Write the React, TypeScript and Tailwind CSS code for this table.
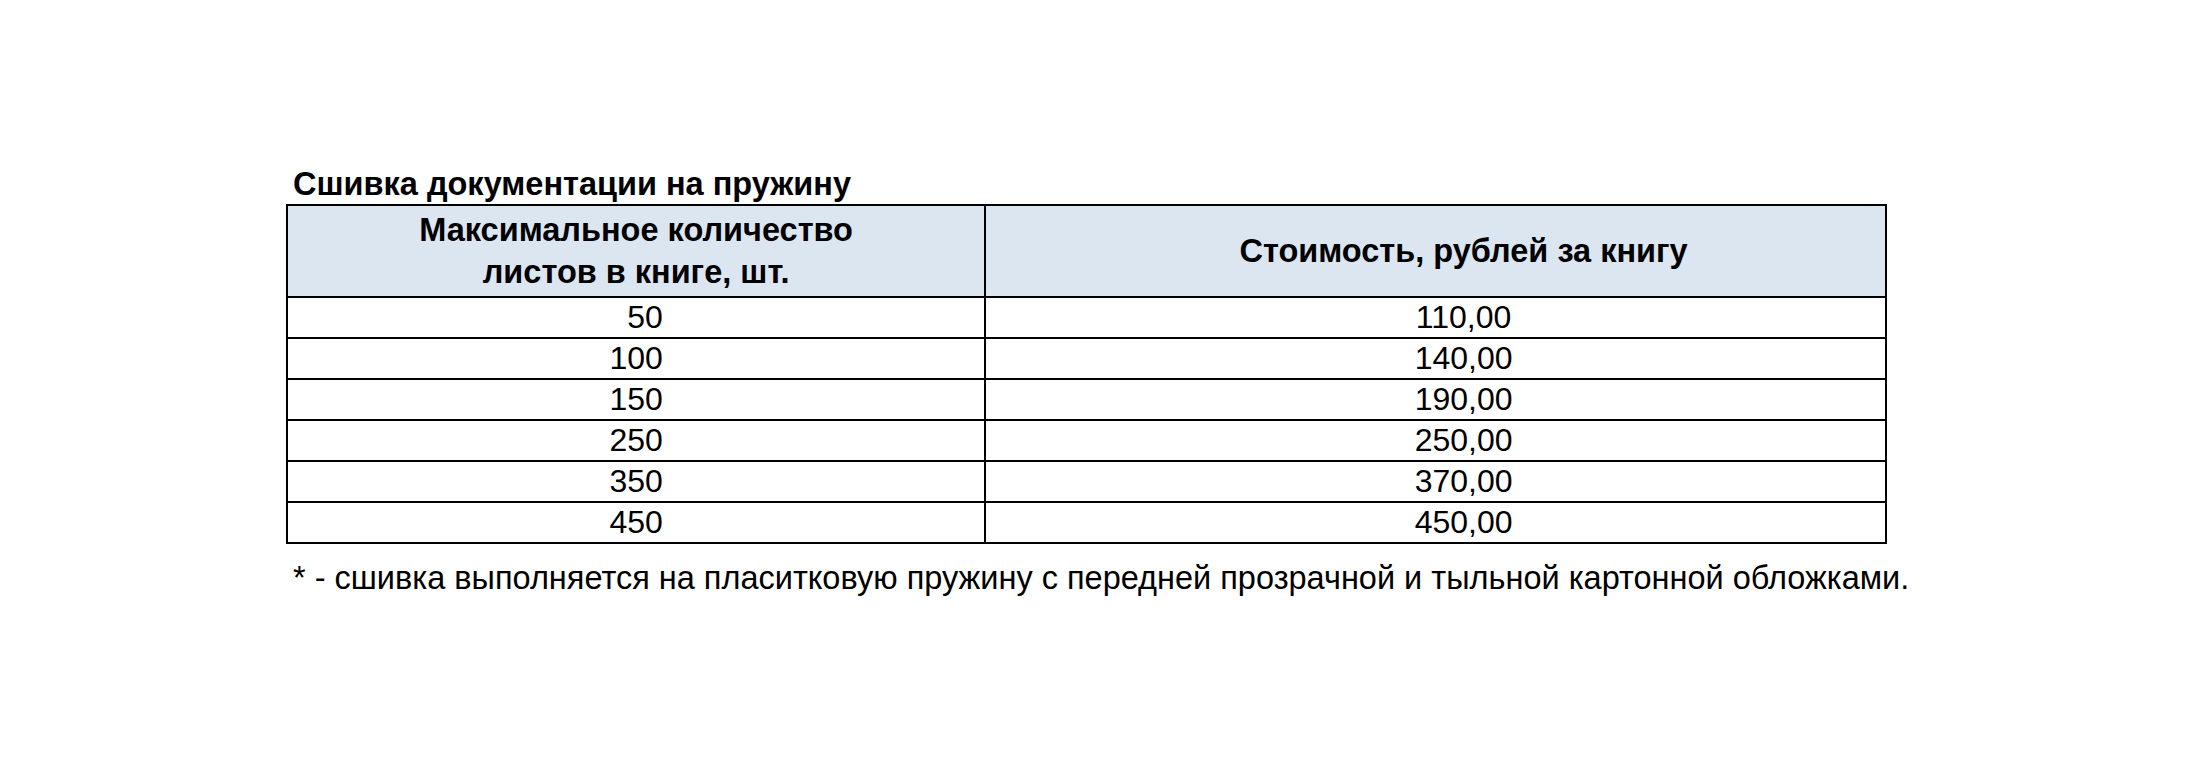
const rows = [
  ["\u00a0\u00a050", "110,00"],
  ["100", "140,00"],
  ["150", "190,00"],
  ["250", "250,00"],
  ["350", "370,00"],
  ["450", "450,00"],
];

export default function App() {
  return (
    <div
      className="min-h-[768px] w-full bg-white pt-[166px] pl-[286px] text-black"
      style={{ fontFamily: '"Liberation Sans", Arial, sans-serif' }}
    >
      <div className="pl-[7px] text-[32.5px] font-bold leading-[36px]">
        Сшивка документации на пружину
      </div>
      <table className="mt-[2px] w-[1601px] border-collapse">
        <colgroup>
          <col className="w-[699px]" />
          <col className="w-[902px]" />
        </colgroup>
        <thead>
          <tr className="h-[92px] bg-[#dce6f1]">
            <th className="border-2 border-black p-0 text-[32.5px] font-bold leading-[42px]">
              Максимальное количество
              <br />
              листов в книге, шт.
            </th>
            <th className="border-2 border-black p-0 pl-[56px] text-[32.5px] font-bold leading-[42px]">
              Стоимость, рублей за книгу
            </th>
          </tr>
        </thead>
        <tbody>
          {rows.map(([count, price]) => (
            <tr key={price} className="h-[41px]">
              <td className="border-2 border-black p-0 text-center text-[32px] leading-[37px] whitespace-pre">
                {count}
              </td>
              <td className="border-2 border-black p-0 pl-[56px] text-center text-[32px] leading-[37px]">
                {price}
              </td>
            </tr>
          ))}
        </tbody>
      </table>
      <div className="mt-[16px] pl-[7px] text-[32.5px] leading-[36px]">
        * - сшивка выполняется на пласитковую пружину с передней прозрачной и тыльной картонной обложками.
      </div>
    </div>
  );
}
